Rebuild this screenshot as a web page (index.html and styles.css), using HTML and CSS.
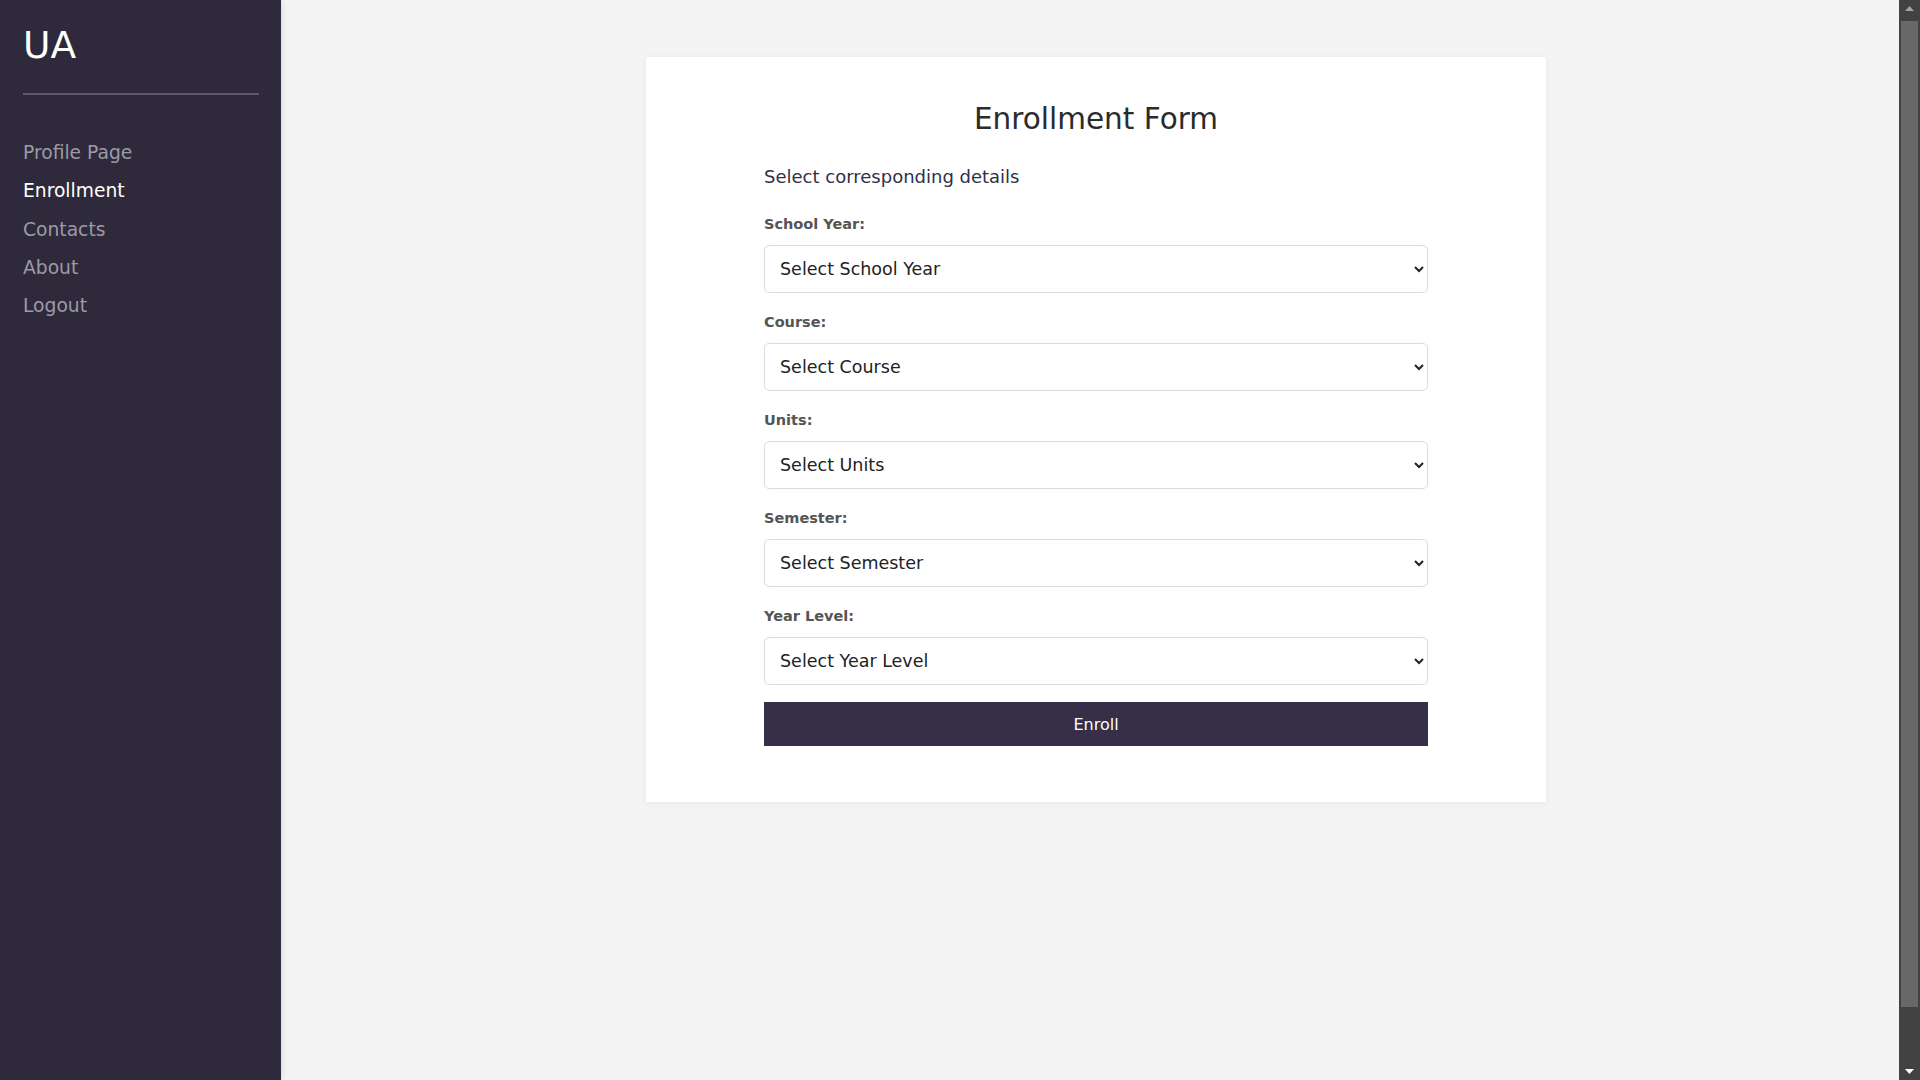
FILE: index.html
```html
<!DOCTYPE html>
<html lang="en">
<head>
<meta charset="utf-8">
<title>Enrollment Form</title>
<link rel="stylesheet" href="styles.css">
</head>
<body>
<div class="layout">
  <aside class="sidebar">
    <div class="brand">UA</div>
    <hr class="brand-rule">
    <nav class="nav">
      <a class="nav-link" href="#">Profile Page</a>
      <a class="nav-link active" href="#">Enrollment</a>
      <a class="nav-link" href="#">Contacts</a>
      <a class="nav-link" href="#">About</a>
      <a class="nav-link" href="#">Logout</a>
    </nav>
  </aside>
  <main class="main">
    <section class="card">
      <h1 class="card-title">Enrollment Form</h1>
      <p class="card-sub">Select corresponding details</p>
      <form class="form">
        <div class="field">
          <label class="field-label" for="sy">School Year:</label>
          <select class="field-select" id="sy"><option>Select School Year</option></select>
        </div>
        <div class="field">
          <label class="field-label" for="course">Course:</label>
          <select class="field-select" id="course"><option>Select Course</option></select>
        </div>
        <div class="field">
          <label class="field-label" for="units">Units:</label>
          <select class="field-select" id="units"><option>Select Units</option></select>
        </div>
        <div class="field">
          <label class="field-label" for="sem">Semester:</label>
          <select class="field-select" id="sem"><option>Select Semester</option></select>
        </div>
        <div class="field">
          <label class="field-label" for="yl">Year Level:</label>
          <select class="field-select" id="yl"><option>Select Year Level</option></select>
        </div>
        <button class="btn" type="button">Enroll</button>
      </form>
    </section>
  </main>
</div>
<div class="scrollbar" aria-hidden="true">
  <div class="sb-btn">
    <svg width="9" height="5" viewBox="0 0 9 5"><polygon points="4.5,0 9,5 0,5" fill="#a3a3a3"/></svg>
  </div>
  <div class="sb-track"><div class="sb-thumb"></div></div>
  <div class="sb-btn">
    <svg width="9" height="5" viewBox="0 0 9 5"><polygon points="0,0 9,0 4.5,5" fill="#ffffff"/></svg>
  </div>
</div>
</body>
</html>
```
FILE: styles.css
```css
body {
  margin: 0;
  font-family: "DejaVu Sans", "Liberation Sans", sans-serif;
  background: #f4f4f4;
  color: #333;
}
.layout {
  display: flex;
  min-height: 100vh;
}
.sidebar {
  width: 281px;
  flex: 0 0 281px;
  box-sizing: border-box;
  background: #2e2a3b;
  padding: 23px 22px 0 23px;
  box-shadow: 1px 0 6px rgba(0, 0, 0, 0.12);
  position: relative;
  z-index: 1;
}
.brand {
  color: #ffffff;
  font-size: 37.5px;
  line-height: 44px;
}
.brand-rule {
  margin: 26px 0 0 0;
  border: 0;
  height: 2px;
  background: #5d5969;
}
.nav {
  display: flex;
  flex-direction: column;
  margin-top: 39px;
}
.nav-link {
  color: #9d99a6;
  text-decoration: none;
  font-size: 18.7px;
  line-height: 38.3px;
}
.nav-link.active {
  color: #ffffff;
}
.main {
  flex: 1;
  display: flex;
  justify-content: center;
  align-items: flex-start;
  padding: 57px 9px 0 0;
}
.card {
  width: 900px;
  box-sizing: border-box;
  background: #ffffff;
  padding: 44px 118px 56px;
  box-shadow: 0 1px 6px rgba(0, 0, 0, 0.06);
}
.card-title {
  margin: 0;
  text-align: center;
  font-weight: normal;
  font-size: 29.5px;
  line-height: 36px;
  color: #2b2b2b;
}
.card-sub {
  margin: 29px 0 0 0;
  font-size: 18px;
  line-height: 22px;
  color: #30304a;
}
.form {
  display: flex;
  flex-direction: column;
  margin-top: 26px;
}
.field {
  display: flex;
  flex-direction: column;
  margin-bottom: 19px;
}
.field:last-of-type {
  margin-bottom: 17px;
}
.field-label {
  font-size: 14.5px;
  line-height: 20px;
  font-weight: bold;
  color: #555555;
  margin-bottom: 11px;
}
.field-select {
  height: 48px;
  box-sizing: border-box;
  border: 1px solid #dcdcdc;
  border-radius: 5px;
  background-color: #ffffff;
  padding: 0 22px 0 11px;
  font-family: "DejaVu Sans", "Liberation Sans", sans-serif;
  font-size: 17.5px;
  color: #222222;
}
.btn {
  height: 44px;
  border: 0;
  background: #372e47;
  color: #ffffff;
  font-family: "DejaVu Sans", "Liberation Sans", sans-serif;
  font-size: 16px;
  cursor: pointer;
}
.scrollbar {
  position: fixed;
  top: 0;
  right: 0;
  width: 21px;
  height: 100vh;
  background: #424242;
  display: flex;
  flex-direction: column;
  z-index: 5;
}
.sb-btn {
  height: 17px;
  flex: 0 0 17px;
  display: flex;
  align-items: center;
  justify-content: center;
}
.sb-btn svg {
  display: block;
}
.sb-track {
  flex: 1;
  display: flex;
  padding: 4px 2px 56px 2px;
}
.sb-thumb {
  flex: 1;
  background: #686868;
}
```
